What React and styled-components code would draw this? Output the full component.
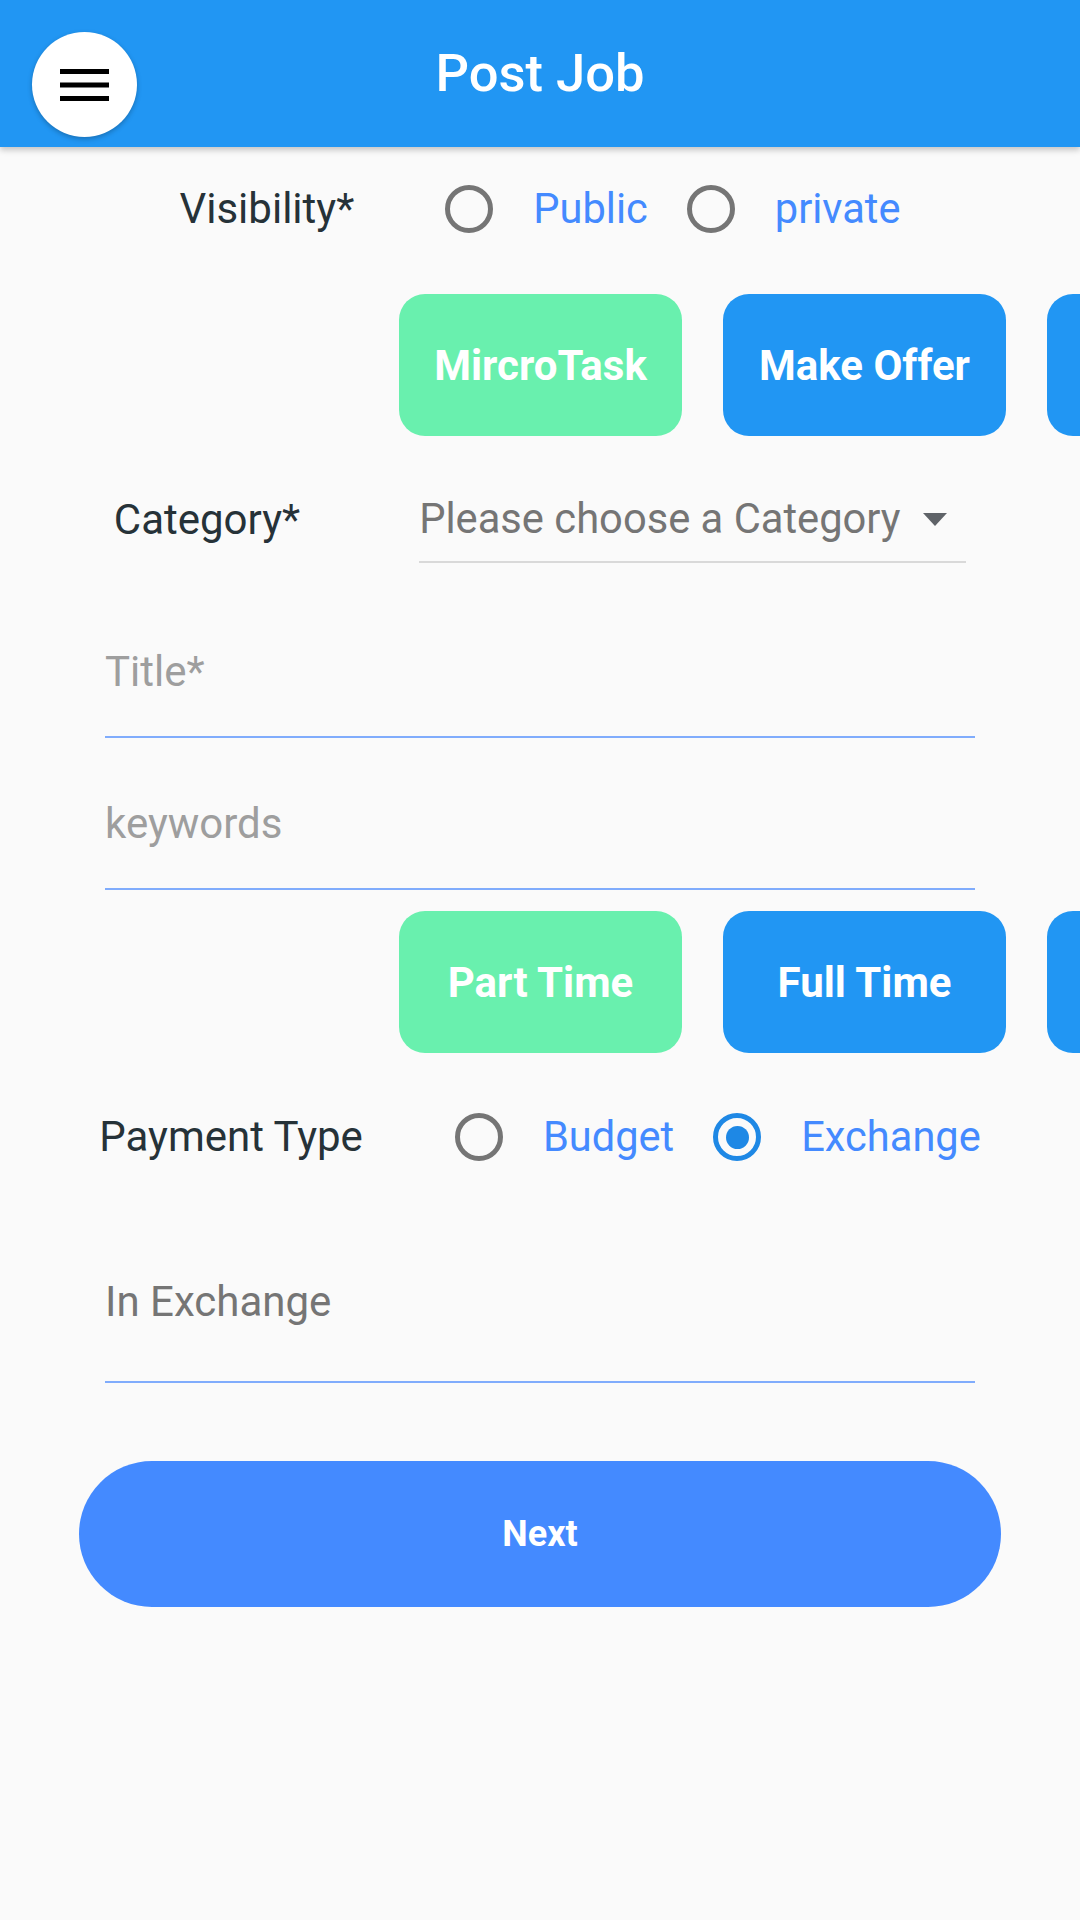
import React from "react";
import styled, { createGlobalStyle } from "styled-components";

const GlobalStyle = createGlobalStyle`
  html, body {
    margin: 0;
    padding: 0;
    background: #fafafa;
    font-family: Roboto, "Noto Sans", "Liberation Sans", sans-serif;
  }
  * { box-sizing: border-box; }
`;

const Page = styled.div`
  width: 1080px;
  min-height: 1920px;
  background: #fafafa;
  overflow: hidden;
`;

const AppBar = styled.header`
  position: relative;
  z-index: 2;
  height: 147px;
  background: #2196f3;
  box-shadow: 0 3px 6px rgba(0, 0, 0, 0.22);
  display: grid;
  grid-template-columns: 1fr auto 1fr;
`;

const MenuButton = styled.button`
  align-self: start;
  justify-self: start;
  margin: 32px 0 0 32px;
  width: 105px;
  height: 105px;
  border-radius: 50%;
  border: none;
  padding: 0;
  background: #ffffff;
  box-shadow: 0 2px 5px rgba(0, 0, 0, 0.25);
  display: flex;
  align-items: center;
  justify-content: center;
`;

const BarTitle = styled.h1`
  margin: 0;
  align-self: center;
  color: #ffffff;
  font-size: 52.5px;
  font-weight: 500;
  line-height: 1;
`;

const RadioRow = styled.div`
  height: ${(p) => p.$h}px;
  display: flex;
  justify-content: center;
  align-items: center;
`;

const RowLabel = styled.span`
  font-size: 42px;
  line-height: 42px;
  color: #263238;
  margin-right: ${(p) => p.$gap}px;
`;

const Options = styled.div`
  display: flex;
  align-items: center;
  gap: 39px;
`;

const Option = styled.label`
  display: flex;
  align-items: center;
  gap: 40px;
`;

const RadioCircle = styled.span`
  width: 48px;
  height: 48px;
  border-radius: 50%;
  border: 5px solid ${(p) => (p.$checked ? "#1e88e5" : "#757575")};
  display: flex;
  align-items: center;
  justify-content: center;
  flex: none;
  &::after {
    content: "";
    width: 23px;
    height: 23px;
    border-radius: 50%;
    background: #1e88e5;
    display: ${(p) => (p.$checked ? "block" : "none")};
  }
`;

const OptionText = styled.span`
  font-size: 41.6px;
  line-height: 42px;
  color: #448aff;
`;

const ChipRow = styled.div`
  margin-top: ${(p) => p.$top}px;
  padding-left: 399px;
  display: flex;
  gap: 41px;
  overflow: hidden;
`;

const Chip = styled.button`
  flex: none;
  width: 283px;
  height: 142px;
  border: none;
  border-radius: 26px;
  background: ${(p) => (p.$active ? "#69f0ae" : "#2196f3")};
  color: #ffffff;
  font-family: Roboto, "Liberation Sans", sans-serif;
  font-size: 42px;
  font-weight: 700;
  display: flex;
  align-items: center;
  justify-content: center;
  padding: 0;
`;

const CategoryRow = styled.div`
  margin-top: 41px;
  display: flex;
  justify-content: center;
  align-items: center;
  gap: 119px;
`;

const Dropdown = styled.div`
  width: 547px;
  height: 86px;
  border-bottom: 2px solid #d9d9d9;
  display: flex;
  align-items: center;
  justify-content: space-between;
  padding: 0 19px 0 0;
`;

const DropdownText = styled.span`
  font-size: 41.7px;
  line-height: 42px;
  color: #757575;
`;

const Field = styled.div`
  width: 870px;
  height: ${(p) => p.$h}px;
  margin: 0 auto;
  border-bottom: 2px solid #80acfc;
  display: flex;
  align-items: flex-end;
  padding-bottom: ${(p) => p.$pb}px;
`;

const FieldText = styled.span`
  font-size: 42px;
  line-height: 42px;
  color: ${(p) => p.$color};
`;

const NextButton = styled.button`
  display: flex;
  align-items: center;
  justify-content: center;
  margin: 78px auto 0;
  width: 922px;
  height: 146px;
  border: none;
  border-radius: 73px;
  background: #448aff;
  color: #ffffff;
  font-family: Roboto, "Liberation Sans", sans-serif;
  font-size: 36px;
  font-weight: 700;
`;

const MenuIcon = () => (
  <svg width="49" height="32" viewBox="0 0 49 32" aria-hidden="true">
    <rect x="0" y="0" width="49" height="5" fill="#000" />
    <rect x="0" y="13.5" width="49" height="5" fill="#000" />
    <rect x="0" y="27" width="49" height="5" fill="#000" />
  </svg>
);

const Caret = () => (
  <svg width="24" height="13" viewBox="0 0 24 13" aria-hidden="true">
    <polygon points="0,0 24,0 12,13" fill="#5f6368" />
  </svg>
);

const RadioOption = ({ label, checked }) => (
  <Option>
    <RadioCircle $checked={checked} />
    <OptionText>{label}</OptionText>
  </Option>
);

export default function App() {
  return (
    <Page>
      <GlobalStyle />
      <AppBar>
        <MenuButton aria-label="menu">
          <MenuIcon />
        </MenuButton>
        <BarTitle>Post Job</BarTitle>
        <span />
      </AppBar>

      <RadioRow $h={124}>
        <RowLabel $gap={91}>Visibility*</RowLabel>
        <Options>
          <RadioOption label="Public" />
          <RadioOption label="private" />
        </Options>
      </RadioRow>

      <ChipRow $top={23}>
        <Chip $active>MircroTask</Chip>
        <Chip>Make Offer</Chip>
        <Chip aria-label="more" />
      </ChipRow>

      <CategoryRow>
        <RowLabel $gap={0}>Category*</RowLabel>
        <Dropdown>
          <DropdownText>Please choose a Category</DropdownText>
          <Caret />
        </Dropdown>
      </CategoryRow>

      <Field $h={175} $pb={43}>
        <FieldText $color="#9e9e9e">Title*</FieldText>
      </Field>
      <Field $h={152} $pb={43}>
        <FieldText $color="#9e9e9e">keywords</FieldText>
      </Field>

      <ChipRow $top={21}>
        <Chip $active>Part Time</Chip>
        <Chip>Full Time</Chip>
        <Chip aria-label="more" />
      </ChipRow>

      <RadioRow $h={168}>
        <RowLabel $gap={92}>Payment Type</RowLabel>
        <Options>
          <RadioOption label="Budget" />
          <RadioOption label="Exchange" checked />
        </Options>
      </RadioRow>

      <Field $h={162} $pb={58}>
        <FieldText $color="#757575">In Exchange</FieldText>
      </Field>

      <NextButton>Next</NextButton>
    </Page>
  );
}
